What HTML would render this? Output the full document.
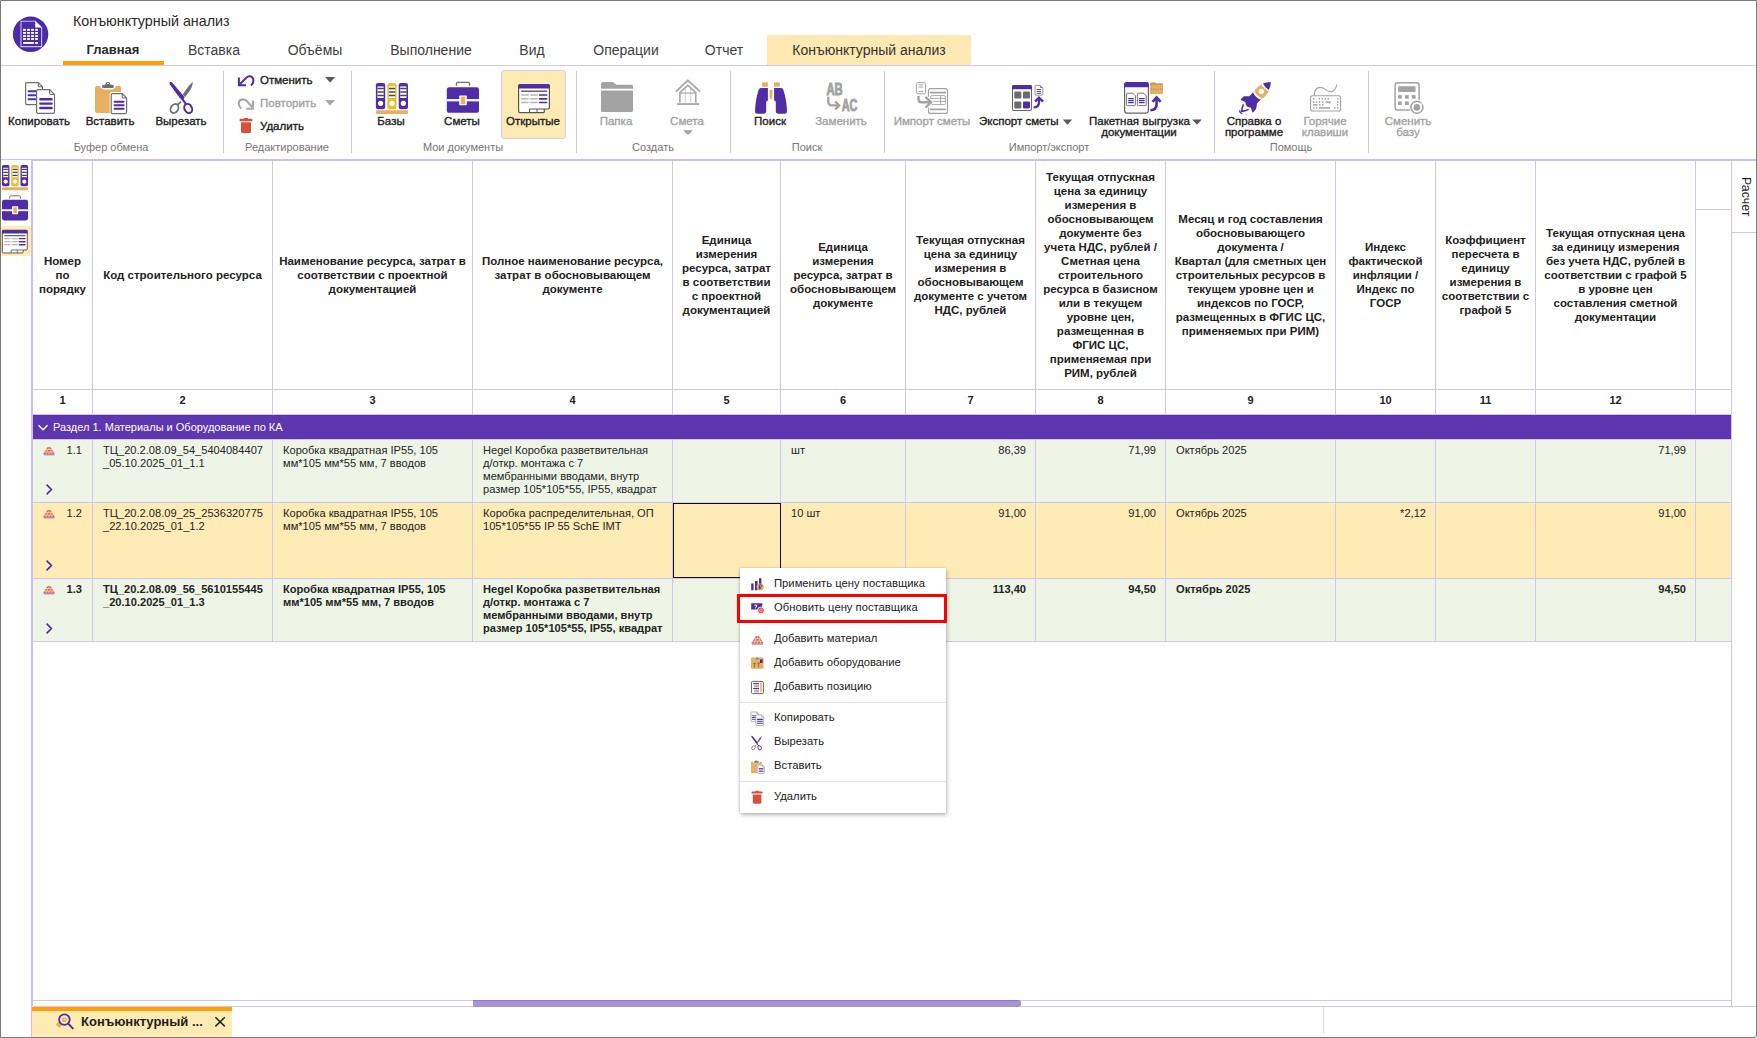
<!DOCTYPE html>
<html><head><meta charset="utf-8">
<style>
*{box-sizing:border-box;margin:0;padding:0}
html,body{width:1757px;height:1038px;overflow:hidden;background:#fff}
body{position:relative;font-family:"Liberation Sans",sans-serif;color:#222}
.a{position:absolute}
.t{position:absolute;white-space:nowrap}
.c{text-align:center}
.r{text-align:right}
.ln{position:absolute;background:#d2c6ec}
.tab{position:absolute;top:42px;width:140px;text-align:center;font-size:14px;line-height:16px;color:#404040}
.bl{position:absolute;width:100px;text-align:center;font-size:11.5px;line-height:11px;font-weight:normal;color:#222;-webkit-text-stroke:0.35px #222}
.bl.g{color:#a3a3a3;-webkit-text-stroke:0.35px #a3a3a3}
.gl{position:absolute;top:142px;width:120px;text-align:center;font-size:11px;line-height:11px;color:#767676}
.sep{position:absolute;top:71px;width:1px;height:82px;background:#cfc2ec}
.hd{position:absolute;top:160px;height:229px;display:flex;align-items:center;justify-content:center;text-align:center;font-size:11.5px;line-height:14px;font-weight:bold;color:#222;white-space:nowrap;letter-spacing:0}
.num{position:absolute;top:395px;text-align:center;font-size:11px;line-height:11px;font-weight:bold;color:#222}
.cell{position:absolute;font-size:11.1px;line-height:13.1px;color:#242424;white-space:nowrap;letter-spacing:0}
.b{font-weight:bold}
.mi{position:absolute;left:774px;font-size:11.25px;line-height:11px;color:#222}
</style></head><body>
<!-- window border -->
<div class="a" style="left:0;top:0;width:1757px;height:1038px;border:1px solid #7a7a7a;border-radius:0 0 3px 0"></div>

<!-- title & tabs -->
<div class="t" style="left:73px;top:13px;font-size:14.3px;line-height:16px;color:#2a2a2a">Конъюнктурный анализ</div>
<div class="a" style="left:767px;top:35px;width:204px;height:30px;background:#fde9b1"></div>
<div class="tab" style="left:43px;font-weight:bold;font-size:13px;color:#2a2a2a">Главная</div>
<div class="tab" style="left:144px">Вставка</div>
<div class="tab" style="left:245px">Объёмы</div>
<div class="tab" style="left:361px">Выполнение</div>
<div class="tab" style="left:462px">Вид</div>
<div class="tab" style="left:556px">Операции</div>
<div class="tab" style="left:654px">Отчет</div>
<div class="tab" style="left:784px;width:170px;color:#333">Конъюнктурный анализ</div>
<div class="a" style="left:1px;top:65px;width:1755px;height:1px;background:#d3c7ee"></div>
<div class="a" style="left:63px;top:61px;width:101px;height:4px;background:#ff9f00"></div>

<!-- ribbon -->
<div class="a" style="left:501px;top:70px;width:65px;height:69px;background:#feeab3;border:1px solid #dccbee;border-radius:3px"></div>
<div class="sep" style="left:223px"></div>
<div class="sep" style="left:351px"></div>
<div class="sep" style="left:576px"></div>
<div class="sep" style="left:730px"></div>
<div class="sep" style="left:884px"></div>
<div class="sep" style="left:1214px"></div>
<div class="sep" style="left:1368px"></div>

<div class="bl" style="left:-11px;top:116px">Копировать</div>
<div class="bl" style="left:60px;top:116px">Вставить</div>
<div class="bl" style="left:131px;top:116px">Вырезать</div>
<div class="t" style="left:260px;top:75px;font-size:11.5px;line-height:11px;-webkit-text-stroke:0.35px #222">Отменить</div>
<div class="t" style="left:260px;top:98px;font-size:11.5px;line-height:11px;color:#a3a3a3;-webkit-text-stroke:0.35px #a3a3a3">Повторить</div>
<div class="t" style="left:260px;top:121px;font-size:11.5px;line-height:11px;-webkit-text-stroke:0.35px #222">Удалить</div>
<div class="bl" style="left:341px;top:116px">Базы</div>
<div class="bl" style="left:412px;top:116px">Сметы</div>
<div class="bl" style="left:483px;top:116px">Открытые</div>
<div class="bl g" style="left:566px;top:116px">Папка</div>
<div class="bl g" style="left:637px;top:116px">Смета</div>
<div class="bl" style="left:720px;top:116px">Поиск</div>
<div class="bl g" style="left:791px;top:116px">Заменить</div>
<div class="bl g" style="left:882px;top:116px">Импорт сметы</div>
<div class="t" style="left:979px;top:116px;font-size:11.5px;line-height:11px;-webkit-text-stroke:0.35px #222">Экспорт сметы</div>
<div class="t" style="left:1089px;top:116px;font-size:11.5px;line-height:11px;-webkit-text-stroke:0.35px #222">Пакетная выгрузка</div>
<div class="bl" style="left:1089px;top:127px">документации</div>
<div class="bl" style="left:1204px;top:116px">Справка о</div>
<div class="bl" style="left:1204px;top:127px">программе</div>
<div class="bl g" style="left:1275px;top:116px">Горячие</div>
<div class="bl g" style="left:1275px;top:127px">клавиши</div>
<div class="bl g" style="left:1358px;top:116px">Сменить</div>
<div class="bl g" style="left:1358px;top:127px">базу</div>

<div class="gl" style="left:51px">Буфер обмена</div>
<div class="gl" style="left:227px">Редактирование</div>
<div class="gl" style="left:403px">Мои документы</div>
<div class="gl" style="left:593px">Создать</div>
<div class="gl" style="left:747px">Поиск</div>
<div class="gl" style="left:989px">Импорт/экспорт</div>
<div class="gl" style="left:1231px">Помощь</div>

<div class="a" style="left:1px;top:159px;width:1755px;height:1px;background:#cdbfea"></div><div class="a" style="left:31px;top:160px;width:1725px;height:1px;background:#cdbfea"></div>

<div class="a" style="left:33px;top:440px;width:1698px;height:62px;background:#eef5e6"></div>
<div class="a" style="left:33px;top:503px;width:1698px;height:75px;background:#feebb5"></div>
<div class="a" style="left:33px;top:579px;width:1698px;height:62px;background:#eef5e6"></div>
<div class="a" style="left:33px;top:415px;width:1698px;height:24px;background:#5d36b0;border-top:1px solid #5530a8"></div>
<div class="a" style="left:31px;top:161px;width:2px;height:845px;background:#cdbfea"></div>
<div class="a" style="left:31px;top:1006px;width:1px;height:31px;background:#cdbfea"></div>
<div class="ln" style="left:33px;top:389px;width:1698px;height:1px"></div>
<div class="ln" style="left:33px;top:414px;width:1698px;height:1px"></div>
<div class="ln" style="left:33px;top:439px;width:1698px;height:1px"></div>
<div class="ln" style="left:33px;top:502px;width:1698px;height:1px"></div>
<div class="ln" style="left:33px;top:578px;width:1698px;height:1px"></div>
<div class="ln" style="left:33px;top:641px;width:1698px;height:1px"></div>
<div class="ln" style="left:92px;top:161px;width:1px;height:253px"></div>
<div class="ln" style="left:92px;top:440px;width:1px;height:201px"></div>
<div class="ln" style="left:272px;top:161px;width:1px;height:253px"></div>
<div class="ln" style="left:272px;top:440px;width:1px;height:201px"></div>
<div class="ln" style="left:472px;top:161px;width:1px;height:253px"></div>
<div class="ln" style="left:472px;top:440px;width:1px;height:201px"></div>
<div class="ln" style="left:672px;top:161px;width:1px;height:253px"></div>
<div class="ln" style="left:672px;top:440px;width:1px;height:201px"></div>
<div class="ln" style="left:780px;top:161px;width:1px;height:253px"></div>
<div class="ln" style="left:780px;top:440px;width:1px;height:201px"></div>
<div class="ln" style="left:905px;top:161px;width:1px;height:253px"></div>
<div class="ln" style="left:905px;top:440px;width:1px;height:201px"></div>
<div class="ln" style="left:1035px;top:161px;width:1px;height:253px"></div>
<div class="ln" style="left:1035px;top:440px;width:1px;height:201px"></div>
<div class="ln" style="left:1165px;top:161px;width:1px;height:253px"></div>
<div class="ln" style="left:1165px;top:440px;width:1px;height:201px"></div>
<div class="ln" style="left:1335px;top:161px;width:1px;height:253px"></div>
<div class="ln" style="left:1335px;top:440px;width:1px;height:201px"></div>
<div class="ln" style="left:1435px;top:161px;width:1px;height:253px"></div>
<div class="ln" style="left:1435px;top:440px;width:1px;height:201px"></div>
<div class="ln" style="left:1535px;top:161px;width:1px;height:253px"></div>
<div class="ln" style="left:1535px;top:440px;width:1px;height:201px"></div>
<div class="ln" style="left:1695px;top:161px;width:1px;height:253px"></div>
<div class="ln" style="left:1695px;top:440px;width:1px;height:201px"></div>
<div class="ln" style="left:1731px;top:161px;width:1px;height:845px"></div>
<div class="ln" style="left:1696px;top:209px;width:35px;height:1px"></div>
<div class="ln" style="left:1732px;top:232px;width:24px;height:1px"></div>
<div class="t" style="left:1736px;top:177px;width:40px;transform-origin:0 0;transform:translate(17px,0) rotate(90deg);font-size:12.4px;line-height:14px;color:#222">Расчет</div>
<div class="hd" style="left:33px;width:59px"><div>Номер<br>по<br>порядку</div></div>
<div class="num" style="left:33px;width:59px">1</div>
<div class="hd" style="left:93px;width:179px"><div>Код строительного ресурса</div></div>
<div class="num" style="left:93px;width:179px">2</div>
<div class="hd" style="left:273px;width:199px"><div>Наименование ресурса, затрат в<br>соответствии с проектной<br>документацией</div></div>
<div class="num" style="left:273px;width:199px">3</div>
<div class="hd" style="left:473px;width:199px"><div>Полное наименование ресурса,<br>затрат в обосновывающем<br>документе</div></div>
<div class="num" style="left:473px;width:199px">4</div>
<div class="hd" style="left:673px;width:107px"><div>Единица<br>измерения<br>ресурса, затрат<br>в соответствии<br>с проектной<br>документацией</div></div>
<div class="num" style="left:673px;width:107px">5</div>
<div class="hd" style="left:781px;width:124px"><div>Единица<br>измерения<br>ресурса, затрат в<br>обосновывающем<br>документе</div></div>
<div class="num" style="left:781px;width:124px">6</div>
<div class="hd" style="left:906px;width:129px"><div>Текущая отпускная<br>цена за единицу<br>измерения в<br>обосновывающем<br>документе с учетом<br>НДС, рублей</div></div>
<div class="num" style="left:906px;width:129px">7</div>
<div class="hd" style="left:1036px;width:129px"><div>Текущая отпускная<br>цена за единицу<br>измерения в<br>обосновывающем<br>документе без<br>учета НДС, рублей /<br>Сметная цена<br>строительного<br>ресурса в базисном<br>или в текущем<br>уровне цен,<br>размещенная в<br>ФГИС ЦС,<br>применяемая при<br>РИМ, рублей</div></div>
<div class="num" style="left:1036px;width:129px">8</div>
<div class="hd" style="left:1166px;width:169px"><div>Месяц и год составления<br>обосновывающего<br>документа /<br>Квартал (для сметных цен<br>строительных ресурсов в<br>текущем уровне цен и<br>индексов по ГОСР,<br>размещенных в ФГИС ЦС,<br>применяемых при РИМ)</div></div>
<div class="num" style="left:1166px;width:169px">9</div>
<div class="hd" style="left:1336px;width:99px"><div>Индекс<br>фактической<br>инфляции /<br>Индекс по<br>ГОСР</div></div>
<div class="num" style="left:1336px;width:99px">10</div>
<div class="hd" style="left:1436px;width:99px"><div>Коэффициент<br>пересчета в<br>единицу<br>измерения в<br>соответствии с<br>графой 5</div></div>
<div class="num" style="left:1436px;width:99px">11</div>
<div class="hd" style="left:1536px;width:159px"><div>Текущая отпускная цена<br>за единицу измерения<br>без учета НДС, рублей в<br>соответствии с графой 5<br>в уровне цен<br>составления сметной<br>документации</div></div>
<div class="num" style="left:1536px;width:159px">12</div>
<svg class="a" style="left:36px;top:422px" width="14" height="12" viewBox="0 0 14 12"><path d="M2.5 3.2 L7 7.8 L11.5 3.2" fill="none" stroke="#fff" stroke-width="1.4"/></svg>
<div class="t" style="left:53px;top:421px;font-size:11px;line-height:13px;color:#fff">Раздел 1. Материалы и Оборудование по КА</div>
<div class="cell r" style="left:-38px;width:120px;top:444px">1.1</div>
<div class="cell" style="left:103px;top:444px">ТЦ_20.2.08.09_54_5404084407<br>_05.10.2025_01_1.1</div>
<div class="cell" style="left:283px;top:444px">Коробка квадратная IP55, 105<br>мм*105 мм*55 мм, 7 вводов</div>
<div class="cell" style="left:483px;top:444px">Hegel Коробка разветвительная<br>д/откр. монтажа с 7<br>мембранными вводами, внутр<br>размер 105*105*55, IP55, квадрат</div>
<div class="cell" style="left:791px;top:444px">шт</div>
<div class="cell r" style="left:906px;width:120px;top:444px">86,39</div>
<div class="cell r" style="left:1036px;width:120px;top:444px">71,99</div>
<div class="cell" style="left:1176px;top:444px">Октябрь 2025</div>
<div class="cell r" style="left:1566px;width:120px;top:444px">71,99</div>
<svg class="a" style="left:44px;top:483px" width="10" height="13" viewBox="0 0 10 13"><path d="M2.6 1.6 L7.4 6.5 L2.6 11.4" fill="none" stroke="#4b2aa8" stroke-width="1.6"/></svg>
<div class="cell r" style="left:-38px;width:120px;top:507px">1.2</div>
<div class="cell" style="left:103px;top:507px">ТЦ_20.2.08.09_25_2536320775<br>_22.10.2025_01_1.2</div>
<div class="cell" style="left:283px;top:507px">Коробка квадратная IP55, 105<br>мм*105 мм*55 мм, 7 вводов</div>
<div class="cell" style="left:483px;top:507px">Коробка распределительная, ОП<br>105*105*55 IP 55 SchE IMT</div>
<div class="cell" style="left:791px;top:507px">10 шт</div>
<div class="cell r" style="left:906px;width:120px;top:507px">91,00</div>
<div class="cell r" style="left:1036px;width:120px;top:507px">91,00</div>
<div class="cell" style="left:1176px;top:507px">Октябрь 2025</div>
<div class="cell r" style="left:1306px;width:120px;top:507px">*2,12</div>
<div class="cell r" style="left:1566px;width:120px;top:507px">91,00</div>
<svg class="a" style="left:44px;top:559px" width="10" height="13" viewBox="0 0 10 13"><path d="M2.6 1.6 L7.4 6.5 L2.6 11.4" fill="none" stroke="#4b2aa8" stroke-width="1.6"/></svg>
<div class="cell b r" style="left:-38px;width:120px;top:583px">1.3</div>
<div class="cell b" style="left:103px;top:583px">ТЦ_20.2.08.09_56_5610155445<br>_20.10.2025_01_1.3</div>
<div class="cell b" style="left:283px;top:583px">Коробка квадратная IP55, 105<br>мм*105 мм*55 мм, 7 вводов</div>
<div class="cell b" style="left:483px;top:583px">Hegel Коробка разветвительная<br>д/откр. монтажа с 7<br>мембранными вводами, внутр<br>размер 105*105*55, IP55, квадрат</div>
<div class="cell b r" style="left:906px;width:120px;top:583px">113,40</div>
<div class="cell b r" style="left:1036px;width:120px;top:583px">94,50</div>
<div class="cell b" style="left:1176px;top:583px">Октябрь 2025</div>
<div class="cell b r" style="left:1566px;width:120px;top:583px">94,50</div>
<svg class="a" style="left:44px;top:622px" width="10" height="13" viewBox="0 0 10 13"><path d="M2.6 1.6 L7.4 6.5 L2.6 11.4" fill="none" stroke="#4b2aa8" stroke-width="1.6"/></svg>
<div class="a" style="left:673px;top:503px;width:108px;height:75px;border:1px solid #111"></div>
<div class="ln" style="left:33px;top:1000px;width:1698px;height:1px"></div>
<div class="ln" style="left:33px;top:1006px;width:1723px;height:1px"></div>
<div class="a" style="left:473px;top:1000px;width:548px;height:7px;background:#a894d5;border-top:1px solid #9278c8;border-radius:0 3px 3px 0"></div>
<div class="a" style="left:32px;top:1007px;width:200px;height:30px;background:#feeab3;border-top:4px solid #ff9f00"></div>
<div class="t b" style="left:81px;top:1014px;font-size:13px;line-height:15px;color:#1e1e1e">Конъюнктурный ...</div>
<div class="a" style="left:1323px;top:1007px;width:1px;height:27px;background:#dddddd"></div>

<div class="a" style="left:740px;top:568px;width:206px;height:245px;background:#fff;box-shadow:1px 2px 4px rgba(0,0,0,0.28), -1px 0 2px rgba(0,0,0,0.12)"></div>
<div class="mi" style="top:578.1px">Применить цену поставщика</div>
<div class="mi" style="top:602.1px">Обновить цену поставщика</div>
<div class="mi" style="top:633.1px">Добавить материал</div>
<div class="mi" style="top:657.1px">Добавить оборудование</div>
<div class="mi" style="top:681.1px">Добавить позицию</div>
<div class="mi" style="top:712.1px">Копировать</div>
<div class="mi" style="top:736.1px">Вырезать</div>
<div class="mi" style="top:760.1px">Вставить</div>
<div class="mi" style="top:791.1px">Удалить</div>
<div class="a" style="left:740px;top:702px;width:206px;height:1px;background:#e3e3e3"></div>
<div class="a" style="left:740px;top:781px;width:206px;height:1px;background:#e3e3e3"></div>
<div class="a" style="left:737px;top:594px;width:210px;height:29px;border:3px solid #ff0000"></div>

<svg class="a" style="left:0;top:0" width="1757" height="1038" viewBox="0 0 1757 1038">

<circle cx="30.6" cy="34.3" r="17.7" fill="#4b2ca7"/>
<path d="M21 21.2 H35.2 L41.6 27.6 V46.6 H21 Z" fill="#4b2ca7" stroke="#c9bcef" stroke-width="1.1"/>
<path d="M35.2 21.2 L41.6 27.6 H35.2 Z" fill="#fff"/>
<rect x="23.1" y="28.9" width="2.8" height="1.9" fill="#fff"/><rect x="23.1" y="32.0" width="2.8" height="1.9" fill="#fff"/><rect x="23.1" y="35.1" width="2.8" height="1.9" fill="#fff"/><rect x="23.1" y="38.0" width="2.8" height="1.9" fill="#fff"/><rect x="27.1" y="28.9" width="2.8" height="1.9" fill="#fff"/><rect x="27.1" y="32.0" width="2.8" height="1.9" fill="#fff"/><rect x="27.1" y="35.1" width="2.8" height="1.9" fill="#fff"/><rect x="27.1" y="38.0" width="2.8" height="1.9" fill="#fff"/><rect x="31.1" y="28.9" width="2.8" height="1.9" fill="#fff"/><rect x="31.1" y="32.0" width="2.8" height="1.9" fill="#fff"/><rect x="31.1" y="35.1" width="2.8" height="1.9" fill="#fff"/><rect x="31.1" y="38.0" width="2.8" height="1.9" fill="#fff"/><rect x="35.1" y="28.9" width="2.8" height="1.9" fill="#fff"/><rect x="35.1" y="32.0" width="2.8" height="1.9" fill="#fff"/><rect x="35.1" y="35.1" width="2.8" height="1.9" fill="#fff"/><rect x="35.1" y="38.0" width="2.8" height="1.9" fill="#fff"/><rect x="23.1" y="42" width="10.8" height="1.9" fill="#fff"/><rect x="35.1" y="42" width="2.9" height="1.9" fill="#fff"/>

<path d="M27 82.6 H38.3 L42.4 86.7 V103.2 Q42.4 104.6 41 104.6 H27 Q25.6 104.6 25.6 103.2 V84 Q25.6 82.6 27 82.6 Z" fill="#fff" stroke="#6e6e6e" stroke-width="1.2"/>
<path d="M38.3 82.6 V85.6 Q38.3 86.7 39.4 86.7 H42.4" fill="none" stroke="#6e6e6e" stroke-width="1.1"/>
<path d="M28.6 91.2 H35.5 M28.6 95.2 H35.5 M28.6 99.2 H35.5" stroke="#4e2da6" stroke-width="2.1" stroke-linecap="round"/>
<path d="M38 89.6 H49.6 L54.5 94.5 V112 Q54.5 113.4 53.1 113.4 H38 Q36.6 113.4 36.6 112 V91 Q36.6 89.6 38 89.6 Z" fill="#fff" stroke="#6e6e6e" stroke-width="1.2"/>
<path d="M49.6 89.6 V93.3 Q49.6 94.5 50.8 94.5 H54.5" fill="none" stroke="#6e6e6e" stroke-width="1.1"/>
<path d="M40.3 99.3 H51.6 M40.3 103.6 H51.6 M40.3 108 H51.6" stroke="#4e2da6" stroke-width="2.4" stroke-linecap="round"/>


<rect x="95" y="86" width="26.2" height="27" rx="2.2" fill="#e6b062"/>
<path d="M99.4 85.6 Q101.4 89.5 104.2 89.5 H111.8 Q114.6 89.5 116.4 85.6 Z" fill="#fff"/>
<rect x="102" y="84.8" width="11.8" height="3.1" rx="1.5" fill="#6e6e6e"/>
<path d="M105.3 85.2 L106.1 82.6 Q106.3 81.9 107 81.9 H108.8 Q109.5 81.9 109.7 82.6 L110.4 85.2 Z" fill="#6e6e6e"/>
<rect x="107" y="83" width="1.8" height="1" fill="#fff"/>
<path d="M112.6 93.6 H122.2 L126.6 98 V112.2 Q126.6 113.6 125.2 113.6 H112.6 Q111.2 113.6 111.2 112.2 V95 Q111.2 93.6 112.6 93.6 Z" fill="#fff" stroke="#fff" stroke-width="3"/>
<path d="M112.6 93.6 H122.2 L126.6 98 V112.2 Q126.6 113.6 125.2 113.6 H112.6 Q111.2 113.6 111.2 112.2 V95 Q111.2 93.6 112.6 93.6 Z" fill="#fff" stroke="#6e6e6e" stroke-width="1.2"/>
<path d="M122.2 93.6 V96.8 Q122.2 98 123.4 98 H126.6" fill="none" stroke="#6e6e6e" stroke-width="1.1"/>
<path d="M114.6 101.8 H123.6 M114.6 105.2 H123.6 M114.6 108.8 H123.6" stroke="#4e2da6" stroke-width="2" stroke-linecap="round"/>


<path d="M170.2 81.8 Q171.6 81.9 172.6 83 L184.7 97.3 L182.7 100.3 L179.7 97.9 L169.7 84.2 Q169.1 82.3 170.2 81.8 Z" fill="#4e2da6"/>
<path d="M182 98.6 L186.2 104.4" stroke="#4e2da6" stroke-width="2"/>
<ellipse cx="188.2" cy="108.5" rx="3.7" ry="4.8" transform="rotate(-30 188.2 108.5)" fill="none" stroke="#4e2da6" stroke-width="2"/>
<path d="M192.9 82 Q192.7 86 190.4 89.7 L185.3 96.9 L182.6 94.7 L187.6 87.4 Q190 84 192.9 82 Z" fill="#6e6e6e"/>
<path d="M181 101.8 L177.6 104.6" stroke="#6e6e6e" stroke-width="1.8"/>
<ellipse cx="174.5" cy="108.5" rx="3.6" ry="4.8" transform="rotate(32 174.5 108.5)" fill="none" stroke="#6e6e6e" stroke-width="1.8"/>


<path d="M239.8 84.4 L246 78 Q248 76.2 250 76.3 Q253.4 76.8 253.4 80.8 Q253.4 83.4 250.9 85.5" fill="none" stroke="#4e2da6" stroke-width="2"/>
<path d="M238.9 77.4 V85.3 H246" fill="none" stroke="#4e2da6" stroke-width="2"/>


<path d="M241.2 108.6 Q238.7 106.2 238.7 103.6 Q238.9 99.5 243.1 99.4 Q245.1 99.4 246.7 101 L252.4 107.2" fill="none" stroke="#a8a8a8" stroke-width="2.1"/>
<path d="M252.9 100.5 V108.8 H246.2" fill="none" stroke="#a8a8a8" stroke-width="2.1"/>


<path d="M239.6 121.2 V119.6 Q239.6 118.8 240.4 118.8 H244 V118 H248 V118.8 H251.6 Q252.4 118.8 252.4 119.6 V121.2 Z" fill="#d9503a"/>
<path d="M241 122.2 H251 V131.4 Q251 133 249.4 133 H242.6 Q241 133 241 131.4 Z" fill="#d9503a"/>

<path d="M325 77 H335.2 L330.1 82.6 Z" fill="#585858"/><path d="M325 100 H335.2 L330.1 105.6 Z" fill="#a8a8a8"/><path d="M1062.8 119.6 H1072.2 L1067.5 124.8 Z" fill="#585858"/><path d="M1192.2 119.6 H1201.8 L1197 124.8 Z" fill="#585858"/>
<rect x="375.9" y="83" width="9.3" height="26.2" rx="2.2" fill="#4e2da6"/><rect x="377.5" y="86.4" width="6.1" height="11.6" fill="#fff"/><path d="M378.2 88.4 H383.09999999999997 M378.2 92 H383.09999999999997 M378.2 95.6 H383.09999999999997" stroke="#444" stroke-width="1.5" stroke-linecap="round"/><circle cx="380.54999999999995" cy="103.3" r="2.6" fill="#fff"/><rect x="387.3" y="83" width="9.3" height="26.2" rx="2.2" fill="#e9c12f"/><rect x="388.90000000000003" y="86.4" width="6.1" height="11.6" fill="#fff"/><path d="M389.6 88.4 H394.5 M389.6 92 H394.5 M389.6 95.6 H394.5" stroke="#444" stroke-width="1.5" stroke-linecap="round"/><circle cx="391.95" cy="103.3" r="2.6" fill="#fff"/><rect x="398.7" y="83" width="9.3" height="26.2" rx="2.2" fill="#4e2da6"/><rect x="400.3" y="86.4" width="6.1" height="11.6" fill="#fff"/><path d="M401.0 88.4 H405.9 M401.0 92 H405.9 M401.0 95.6 H405.9" stroke="#444" stroke-width="1.5" stroke-linecap="round"/><circle cx="403.34999999999997" cy="103.3" r="2.6" fill="#fff"/><rect x="376" y="110.2" width="32" height="3.7" rx="1" fill="#e6b062"/>

<path d="M456.4 85.8 V83.6 Q456.4 82.4 457.6 82.4 H468.4 Q469.6 82.4 469.6 83.6 V85.8" fill="none" stroke="#6e6e6e" stroke-width="1.2"/>
<rect x="446.8" y="87.2" width="32.2" height="25.6" rx="2.6" fill="#4e2da6"/>
<rect x="446.8" y="99" width="32.2" height="2.4" fill="#f4f0fb"/>
<rect x="459.2" y="95.4" width="7.6" height="9.8" rx="0.8" fill="#fff"/>
<rect x="460.8" y="96.6" width="4.4" height="7.4" fill="#e6b062"/>


<path d="M520 84.6 H548 Q549.4 84.6 549.4 86 V107.6 Q549.4 109 548 109 H544.3 V111.4 Q544.3 112.7 543 112.7 H520 Q518.6 112.7 518.6 111.3 V86 Q518.6 84.6 520 84.6 Z" fill="#fff" stroke="#555" stroke-width="1.2"/>
<path d="M518.2 88.6 V86 Q518.2 84.2 520 84.2 H548 Q549.8 84.2 549.8 86 V88.6 Z" fill="#4e2da6"/>
<path d="M521.6 91.2 H546.6" stroke="#666" stroke-width="1.6" stroke-linecap="round"/>
<path d="M521.6 95 H528.2 M530.8 95 H537.2 M521.6 98.8 H528.2 M530.8 98.8 H537.2 M521.6 102.5 H528.2 M530.8 102.5 H537.2" stroke="#b8b8b8" stroke-width="1.6" stroke-linecap="round"/>
<path d="M539.6 95 H546.6 M539.6 98.8 H546.6 M539.6 102.5 H546.6" stroke="#4e2da6" stroke-width="1.7" stroke-linecap="round"/>
<path d="M529.5 109 V112.7 M537 109 V112.7 M529.5 109 H544.3" stroke="#555" stroke-width="1"/>


<path d="M601 88.8 V83.6 Q601 82 602.6 82 H611.8 Q613.2 82 614.3 83 L616.3 84.7 H631.4 Q633 84.7 633 86.3 V88.8 Z" fill="#a3a3a3"/>
<path d="M601 90.6 H633 V110.4 Q633 112 631.4 112 H602.6 Q601 112 601 110.4 Z" fill="#a3a3a3"/>


<path d="M676.1 91.4 L687.8 80.4 L699.9 91.4" fill="none" stroke="#a3a3a3" stroke-width="1.7"/>
<path d="M685.3 86.8 V102.6 M690.6 86.8 V102.6" stroke="#d0d0d0" stroke-width="1"/>
<path d="M679.9 102.8 V92.6 L687.8 85.2 L695.8 92.6 V102.8" fill="none" stroke="#a3a3a3" stroke-width="1.5"/>
<path d="M680 93.1 H695.6" stroke="#a3a3a3" stroke-width="1.1"/>
<rect x="677" y="103.2" width="22.2" height="1.7" fill="#a3a3a3"/>
<path d="M683 130.2 H693 L688 135.1 Z" fill="#a3a3a3"/>


<rect x="762.1" y="82.3" width="5.8" height="4.4" fill="#e6b062"/>
<rect x="773.9" y="82.3" width="5.9" height="4.4" fill="#e6b062"/>
<path d="M760.6 88.1 H767.9 V100.6 L766.2 101.6 V111.6 Q766.2 113.7 764 113.7 H757.2 Q755 113.7 755 111.4 Q755.4 100 758.2 91.2 Q759 88.1 760.6 88.1 Z" fill="#4e2da6"/>
<path d="M781.4 88.1 H774.1 V100.6 L775.8 101.6 V111.6 Q775.8 113.7 778 113.7 H784.8 Q787 113.7 787 111.4 Q786.6 100 783.8 91.2 Q783 88.1 781.4 88.1 Z" fill="#4e2da6"/>
<rect x="769.6" y="89.9" width="2.8" height="8.9" fill="#e6b062"/>


<text x="826.4" y="94.6" font-family="Liberation Sans" font-weight="bold" font-size="15.8" textLength="16.4" lengthAdjust="spacingAndGlyphs" fill="#a3a3a3" stroke="#a3a3a3" stroke-width="0.9">AB</text>
<text x="841.7" y="111.3" font-family="Liberation Sans" font-weight="bold" font-size="15.8" textLength="15.8" lengthAdjust="spacingAndGlyphs" fill="#a3a3a3" stroke="#a3a3a3" stroke-width="0.9">AC</text>
<path d="M828.3 96.8 V101.6 Q828.3 105.4 832 105.4 H839" fill="none" stroke="#a3a3a3" stroke-width="2.3"/>
<path d="M835.2 101.4 L839.2 105.4 L835.2 109.4" fill="none" stroke="#a3a3a3" stroke-width="2.3"/>


<rect x="916.6" y="82.6" width="8.9" height="11.2" rx="1.2" fill="#fff" stroke="#a3a3a3" stroke-width="1"/>
<path d="M918.6 84.8 H923.4" stroke="#a3a3a3" stroke-width="1"/>
<path d="M918.6 86.6 H923.4 M918.6 87.4 H923.4" stroke="#cfcfcf" stroke-width="1"/>
<path d="M918.6 91.4 H923.4" stroke="#a3a3a3" stroke-width="1"/>
<rect x="928.5" y="88.6" width="19" height="24.8" rx="2" fill="#fff" stroke="#a3a3a3" stroke-width="1.2"/>
<path d="M930.6 92.6 H945.4 M930.6 109.4 H945.4" stroke="#a3a3a3" stroke-width="1.6" stroke-linecap="round"/>
<rect x="930.6" y="95.6" width="14.8" height="9" rx="1.2" fill="none" stroke="#a3a3a3" stroke-width="0.9"/>
<path d="M930.6 98.4 H945.4 M932 101.4 H945.4 M940.6 95.6 V104.6" stroke="#a3a3a3" stroke-width="0.9"/>
<path d="M926.2 97.6 L931 102.3 L926.2 107" fill="none" stroke="#fff" stroke-width="4.2" stroke-linecap="round"/>
<path d="M918.5 96 V99 Q918.5 102.3 921.8 102.3 H930.4" fill="none" stroke="#a3a3a3" stroke-width="2.4"/>
<path d="M926.2 97.6 L931 102.3 L926.2 107" fill="none" stroke="#a3a3a3" stroke-width="2.4" stroke-linecap="round"/>


<rect x="1012.5" y="85.5" width="19" height="25" rx="1.6" fill="#fff" stroke="#666" stroke-width="1.1"/>
<path d="M1012 89.2 V86.6 Q1012 85 1013.6 85 H1030.4 Q1032 85 1032 86.6 V89.2 Z" fill="#4e2da6"/>
<rect x="1014.3" y="91.6" width="7" height="7" rx="1.2" fill="#6b6b6b"/>
<rect x="1023" y="91.6" width="7" height="7" rx="1.2" fill="#6b6b6b"/>
<rect x="1014.3" y="101.4" width="7" height="7" rx="1.2" fill="#6b6b6b"/>
<rect x="1023" y="101.4" width="7" height="7" rx="1.2" fill="#4e2da6"/>
<path d="M1035.8 85.4 H1040.2 L1042.8 88 V94.4 Q1042.8 95.2 1042 95.2 H1035.8 Q1035 95.2 1035 94.4 V86.2 Q1035 85.4 1035.8 85.4 Z" fill="#fff" stroke="#8a8a8a" stroke-width="0.9"/>
<path d="M1040.2 85.4 V87.4 Q1040.2 88 1040.8 88 H1042.8 Z" fill="#777"/>
<path d="M1036.6 89.5 H1041.2 M1036.6 91.5 H1041.2 M1036.6 93.4 H1041.2" stroke="#4e2da6" stroke-width="0.9"/>
<path d="M1033.6 107.4 Q1039 107.4 1039 102 V98.6" fill="none" stroke="#4e2da6" stroke-width="2.3"/>
<path d="M1035 101.6 L1039 97.6 L1043.1 101.6" fill="none" stroke="#4e2da6" stroke-width="2.3"/>


<rect x="1124.6" y="82.6" width="23.8" height="30.6" rx="2.6" fill="#fff" stroke="#666" stroke-width="1.2"/>
<path d="M1124 87.2 V85 Q1124 82 1127 82 H1146 Q1149 82 1149 85 V87.2 Z" fill="#4e2da6"/>
<path d="M1127.5 93.2 H1132.8 L1135.3999999999999 95.8 V104.8 Q1135.3999999999999 105.6 1134.6 105.6 H1127.5 Q1126.6 105.6 1126.6 104.8 V94 Q1126.6 93.2 1127.5 93.2 Z" fill="#fff" stroke="#666" stroke-width="0.9"/><path d="M1128.1999999999998 98.6 H1133.8 M1128.1999999999998 100.6 H1133.8 M1128.1999999999998 102.6 H1133.8" stroke="#4e2da6" stroke-width="1.1"/><path d="M1138.3000000000002 93.2 H1143.6000000000001 L1146.2 95.8 V104.8 Q1146.2 105.6 1145.4 105.6 H1138.3000000000002 Q1137.4 105.6 1137.4 104.8 V94 Q1137.4 93.2 1138.3000000000002 93.2 Z" fill="#fff" stroke="#666" stroke-width="0.9"/><path d="M1139.0 98.6 H1144.6000000000001 M1139.0 100.6 H1144.6000000000001 M1139.0 102.6 H1144.6000000000001" stroke="#4e2da6" stroke-width="1.1"/>
<path d="M1150 84.6 Q1150 82.2 1152 82.2 H1155 L1156.6 84 H1163 V94 H1150 Z" fill="#e6b062"/>
<path d="M1150 84 H1163" stroke="#b98a3a" stroke-width="1.2"/>
<path d="M1150.5 89.2 H1163" stroke="#8a8a9a" stroke-width="1" stroke-dasharray="1.2 1.2"/>
<path d="M1150.4 110.2 Q1156.6 110.2 1156.6 104 V98.6" fill="none" stroke="#4e2da6" stroke-width="2.6"/>
<path d="M1152.6 101.8 L1156.6 97.4 L1160.6 101.8" fill="none" stroke="#4e2da6" stroke-width="2.6"/>


<path d="M1262.9 83.6 Q1266 82.2 1270.9 81.9 Q1270.9 86.5 1268.7 90 Q1264.5 87.2 1262.9 83.6 Z" fill="#4e2da6"/>
<path d="M1261.5 84.3 Q1263.5 88.6 1268.8 91.3 Q1266.5 95.6 1262.4 98.8 Q1257.4 96.6 1254.3 91 Q1257.4 86.6 1261.5 84.3 Z" fill="#e6b062"/>
<circle cx="1261.3" cy="91.4" r="2.6" fill="#fff"/>
<path d="M1253 92.2 Q1255.5 97.6 1260.7 99.8 Q1258 102 1256.8 104 Q1257.4 109 1252.6 112.7 Q1251.4 109.5 1250.9 107.4 Q1248 107.2 1247.4 106.7 Q1245.6 105 1245.4 102.2 Q1242.5 100.6 1240.4 100.1 Q1242 97.5 1244 96.3 Q1247 96 1249.2 96.3 Q1251.5 94.3 1253 92.2 Z" fill="#4e2da6"/>
<path d="M1243.6 104.4 Q1241.4 108.5 1241.7 111.4 Q1245 111.2 1248.7 109.4" fill="none" stroke="#4e2da6" stroke-width="1.6"/>
<path d="M1239.7 110.3 Q1239.5 113.3 1242.4 113.7" fill="none" stroke="#4e2da6" stroke-width="1.2"/>


<rect x="1310.6" y="95.8" width="30" height="15.2" rx="2" fill="#fff" stroke="#a3a3a3" stroke-width="1.1"/>
<path d="M1314.4 95.8 Q1313.8 88 1320 87.4 Q1322.6 87.4 1325.6 89.6 Q1329.6 92.6 1332.6 91.2 Q1336.4 89 1336.6 84.6" fill="none" stroke="#a3a3a3" stroke-width="1.1"/>
<rect x="1313" y="98" width="1.4" height="1.5" fill="#a3a3a3"/><rect x="1318.6" y="98" width="1.4" height="1.5" fill="#a3a3a3"/><rect x="1321.6" y="98" width="1.4" height="1.5" fill="#a3a3a3"/><rect x="1324.6" y="98" width="1.4" height="1.5" fill="#a3a3a3"/><rect x="1327.6" y="98" width="1.4" height="1.5" fill="#a3a3a3"/><rect x="1337" y="98" width="1.4" height="1.5" fill="#a3a3a3"/><rect x="1313" y="101.3" width="1.4" height="1.5" fill="#a3a3a3"/><rect x="1316" y="101.3" width="1.4" height="1.5" fill="#a3a3a3"/><rect x="1319" y="101.3" width="1.4" height="1.5" fill="#a3a3a3"/><rect x="1322" y="101.3" width="1.4" height="1.5" fill="#a3a3a3"/><rect x="1325.6" y="101.3" width="4.8" height="1.5" fill="#a3a3a3"/><rect x="1337" y="101.3" width="1.4" height="1.5" fill="#a3a3a3"/><rect x="1313" y="104.1" width="4.6" height="1.5" fill="#a3a3a3"/><rect x="1319" y="104.1" width="1.4" height="1.5" fill="#a3a3a3"/><rect x="1322" y="104.1" width="1.4" height="1.5" fill="#a3a3a3"/><rect x="1328.8" y="102" width="1.6" height="1.5" fill="#a3a3a3"/><rect x="1337" y="104.1" width="1.4" height="1.5" fill="#a3a3a3"/><rect x="1313" y="107.2" width="1.4" height="1.5" fill="#a3a3a3"/><rect x="1316" y="107.2" width="1.4" height="1.5" fill="#a3a3a3"/><rect x="1319" y="107.2" width="11" height="1.5" fill="#a3a3a3"/><rect x="1334" y="107.2" width="1.4" height="1.5" fill="#a3a3a3"/><rect x="1337" y="107.2" width="1.4" height="1.5" fill="#a3a3a3"/>

<rect x="1395.1" y="82.8" width="24" height="27.2" rx="2.6" fill="none" stroke="#a3a3a3" stroke-width="1.5"/>
<rect x="1398" y="86.2" width="17.6" height="5.7" rx="0.8" fill="#a3a3a3"/>
<rect x="1398" y="95.1" width="3.8" height="3.6" fill="#a3a3a3"/><rect x="1405" y="95.1" width="3.8" height="3.6" fill="#a3a3a3"/><rect x="1411.8" y="95.1" width="3.8" height="3.6" fill="#a3a3a3"/>
<rect x="1398" y="101.4" width="3.8" height="3.6" fill="#a3a3a3"/><rect x="1405" y="101.4" width="3.8" height="3.6" fill="#a3a3a3"/>
<circle cx="1416.9" cy="107.2" r="7.6" fill="#fff"/>
<circle cx="1416.9" cy="107.2" r="6" fill="none" stroke="#a3a3a3" stroke-width="1.5"/>
<circle cx="1416.9" cy="107.4" r="3.3" fill="#a3a3a3"/>
<path d="M1419 103.6 L1422.4 103.2 L1421.6 106.4 Z" fill="#fff"/>

<rect x="1" y="226" width="30" height="30" rx="3" fill="#feeab3"/>
<g transform="translate(2 165) scale(0.815) translate(-376 -83)"><rect x="375.9" y="83" width="9.3" height="26.2" rx="2.2" fill="#4e2da6"/><rect x="377.5" y="86.4" width="6.1" height="11.6" fill="#fff"/><path d="M378.2 88.4 H383.09999999999997 M378.2 92 H383.09999999999997 M378.2 95.6 H383.09999999999997" stroke="#444" stroke-width="1.5" stroke-linecap="round"/><circle cx="380.54999999999995" cy="103.3" r="2.6" fill="#fff"/><rect x="387.3" y="83" width="9.3" height="26.2" rx="2.2" fill="#e9c12f"/><rect x="388.90000000000003" y="86.4" width="6.1" height="11.6" fill="#fff"/><path d="M389.6 88.4 H394.5 M389.6 92 H394.5 M389.6 95.6 H394.5" stroke="#444" stroke-width="1.5" stroke-linecap="round"/><circle cx="391.95" cy="103.3" r="2.6" fill="#fff"/><rect x="398.7" y="83" width="9.3" height="26.2" rx="2.2" fill="#4e2da6"/><rect x="400.3" y="86.4" width="6.1" height="11.6" fill="#fff"/><path d="M401.0 88.4 H405.9 M401.0 92 H405.9 M401.0 95.6 H405.9" stroke="#444" stroke-width="1.5" stroke-linecap="round"/><circle cx="403.34999999999997" cy="103.3" r="2.6" fill="#fff"/><rect x="376" y="110.2" width="32" height="3.7" rx="1" fill="#e6b062"/></g>
<g transform="translate(2 195.8) scale(0.81) translate(-446.8 -82.4)">
<path d="M456.4 85.8 V83.6 Q456.4 82.4 457.6 82.4 H468.4 Q469.6 82.4 469.6 83.6 V85.8" fill="none" stroke="#6e6e6e" stroke-width="1.2"/>
<rect x="446.8" y="87.2" width="32.2" height="25.6" rx="2.6" fill="#4e2da6"/>
<rect x="446.8" y="99" width="32.2" height="2.4" fill="#f4f0fb"/>
<rect x="459.2" y="95.4" width="7.6" height="9.8" rx="0.8" fill="#fff"/>
<rect x="460.8" y="96.6" width="4.4" height="7.4" fill="#e6b062"/>
</g>
<g transform="translate(2 229.9) scale(0.81) translate(-518.2 -84.2)">
<path d="M520 84.6 H548 Q549.4 84.6 549.4 86 V107.6 Q549.4 109 548 109 H544.3 V111.4 Q544.3 112.7 543 112.7 H520 Q518.6 112.7 518.6 111.3 V86 Q518.6 84.6 520 84.6 Z" fill="#fff" stroke="#555" stroke-width="1.2"/>
<path d="M518.2 88.6 V86 Q518.2 84.2 520 84.2 H548 Q549.8 84.2 549.8 86 V88.6 Z" fill="#4e2da6"/>
<path d="M521.6 91.2 H546.6" stroke="#666" stroke-width="1.6" stroke-linecap="round"/>
<path d="M521.6 95 H528.2 M530.8 95 H537.2 M521.6 98.8 H528.2 M530.8 98.8 H537.2 M521.6 102.5 H528.2 M530.8 102.5 H537.2" stroke="#b8b8b8" stroke-width="1.6" stroke-linecap="round"/>
<path d="M539.6 95 H546.6 M539.6 98.8 H546.6 M539.6 102.5 H546.6" stroke="#4e2da6" stroke-width="1.7" stroke-linecap="round"/>
<path d="M529.5 109 V112.7 M537 109 V112.7 M529.5 109 H544.3" stroke="#555" stroke-width="1"/>
</g>
<g transform="translate(43 447) scale(1.0)"><path d="M5.2 0 H6.8 Q7.4 0 7.8 0.6 L12 7.3 H0 L4.2 0.6 Q4.6 0 5.2 0 Z" fill="#e06a50"/><path d="M2.6 2.5 H9.4 M1.2 5 H10.8 M6 0.3 V2.5 M4.2 2.5 V5 M7.8 2.5 V5 M3 5 V7.2 M6 5 V7.2 M9 5 V7.2" stroke="#f9dccd" stroke-width="0.7"/><rect x="0.8" y="7.4" width="10.6" height="0.9" fill="#7c64c0"/></g>
<g transform="translate(43 510) scale(1.0)"><path d="M5.2 0 H6.8 Q7.4 0 7.8 0.6 L12 7.3 H0 L4.2 0.6 Q4.6 0 5.2 0 Z" fill="#e06a50"/><path d="M2.6 2.5 H9.4 M1.2 5 H10.8 M6 0.3 V2.5 M4.2 2.5 V5 M7.8 2.5 V5 M3 5 V7.2 M6 5 V7.2 M9 5 V7.2" stroke="#f9dccd" stroke-width="0.7"/><rect x="0.8" y="7.4" width="10.6" height="0.9" fill="#7c64c0"/></g>
<g transform="translate(43 586) scale(1.0)"><path d="M5.2 0 H6.8 Q7.4 0 7.8 0.6 L12 7.3 H0 L4.2 0.6 Q4.6 0 5.2 0 Z" fill="#e06a50"/><path d="M2.6 2.5 H9.4 M1.2 5 H10.8 M6 0.3 V2.5 M4.2 2.5 V5 M7.8 2.5 V5 M3 5 V7.2 M6 5 V7.2 M9 5 V7.2" stroke="#f9dccd" stroke-width="0.7"/><rect x="0.8" y="7.4" width="10.6" height="0.9" fill="#7c64c0"/></g>
<path d="M751.2 583.6 H753.6 V590.2 H751.2 Z M755 581 H757.6 V590.2 H755 Z M759 578.2 H761.4 V586 H759 Z" fill="#4e2da6"/><circle cx="760.2" cy="587" r="3.6" fill="#e6b062"/><path d="M759.4 589.4 V584.8 H760.8 Q762 584.8 762 586 Q762 587.2 760.8 587.2 H758.8 M758.8 588.3 H761" fill="none" stroke="#4e2da6" stroke-width="0.9"/>
<path d="M751.2 603.2 H761.6 Q762.6 603.2 762.4 604.2 L761.6 609.6 H751.2 Z" fill="#4e2da6"/><path d="M754.4 605.2 H757 L755.4 608.4" fill="none" stroke="#fff" stroke-width="1"/><circle cx="760.9" cy="610.4" r="3.4" fill="#e05038" stroke="#fff" stroke-width="0.8"/><circle cx="760.9" cy="610.4" r="1.4" fill="none" stroke="#f8c8b8" stroke-width="0.8"/>
<g transform="translate(751.2 636) scale(1.03)"><path d="M5.2 0 H6.8 Q7.4 0 7.8 0.6 L12 7.3 H0 L4.2 0.6 Q4.6 0 5.2 0 Z" fill="#e06a50"/><path d="M2.6 2.5 H9.4 M1.2 5 H10.8 M6 0.3 V2.5 M4.2 2.5 V5 M7.8 2.5 V5 M3 5 V7.2 M6 5 V7.2 M9 5 V7.2" stroke="#f9dccd" stroke-width="0.7"/><rect x="0.8" y="7.4" width="10.6" height="0.9" fill="#7c64c0"/></g>
<rect x="751" y="657.6" width="12.6" height="11.2" rx="1" fill="#e6b062"/><rect x="756" y="657.6" width="2.6" height="2" fill="#8a8a8a"/><path d="M753 663.6 H756 M754.5 663.6 V667.6 M757.4 663 H760 M758.6 663 V667.6" stroke="#8a6a4a" stroke-width="0.9"/><rect x="760" y="659.4" width="2.6" height="3.6" fill="#4e2da6"/>
<rect x="751.4" y="681.4" width="12" height="12.2" rx="1.2" fill="#fff" stroke="#555" stroke-width="0.9"/><path d="M753.2 683.6 H759 M753.2 688.5 H759" stroke="#4e2da6" stroke-width="1"/><path d="M754 685.2 H759 M754 686.8 H759 M754 690.2 H759 M754 691.8 H759" stroke="#777" stroke-width="0.8"/><path d="M761 683 V691" stroke="#e6b062" stroke-width="1.5"/><path d="M759.8 690.4 L761 692.4 L762.2 690.4 Z" fill="#e6b062"/>
<g transform="translate(751 712) scale(0.44) translate(-25.6 -82.6)">
<path d="M27 82.6 H38.3 L42.4 86.7 V103.2 Q42.4 104.6 41 104.6 H27 Q25.6 104.6 25.6 103.2 V84 Q25.6 82.6 27 82.6 Z" fill="#fff" stroke="#6e6e6e" stroke-width="1.2"/>
<path d="M38.3 82.6 V85.6 Q38.3 86.7 39.4 86.7 H42.4" fill="none" stroke="#6e6e6e" stroke-width="1.1"/>
<path d="M28.6 91.2 H35.5 M28.6 95.2 H35.5 M28.6 99.2 H35.5" stroke="#4e2da6" stroke-width="2.1" stroke-linecap="round"/>
<path d="M38 89.6 H49.6 L54.5 94.5 V112 Q54.5 113.4 53.1 113.4 H38 Q36.6 113.4 36.6 112 V91 Q36.6 89.6 38 89.6 Z" fill="#fff" stroke="#6e6e6e" stroke-width="1.2"/>
<path d="M49.6 89.6 V93.3 Q49.6 94.5 50.8 94.5 H54.5" fill="none" stroke="#6e6e6e" stroke-width="1.1"/>
<path d="M40.3 99.3 H51.6 M40.3 103.6 H51.6 M40.3 108 H51.6" stroke="#4e2da6" stroke-width="2.4" stroke-linecap="round"/>
</g>
<g transform="translate(751.4 735.8) scale(0.45) translate(-169.8 -81.8)">
<path d="M170.2 81.8 Q171.6 81.9 172.6 83 L184.7 97.3 L182.7 100.3 L179.7 97.9 L169.7 84.2 Q169.1 82.3 170.2 81.8 Z" fill="#4e2da6"/>
<path d="M182 98.6 L186.2 104.4" stroke="#4e2da6" stroke-width="2"/>
<ellipse cx="188.2" cy="108.5" rx="3.7" ry="4.8" transform="rotate(-30 188.2 108.5)" fill="none" stroke="#4e2da6" stroke-width="2"/>
<path d="M192.9 82 Q192.7 86 190.4 89.7 L185.3 96.9 L182.6 94.7 L187.6 87.4 Q190 84 192.9 82 Z" fill="#6e6e6e"/>
<path d="M181 101.8 L177.6 104.6" stroke="#6e6e6e" stroke-width="1.8"/>
<ellipse cx="174.5" cy="108.5" rx="3.6" ry="4.8" transform="rotate(32 174.5 108.5)" fill="none" stroke="#6e6e6e" stroke-width="1.8"/>
</g>
<g transform="translate(751 760) scale(0.42) translate(-95 -81.6)">
<rect x="95" y="86" width="26.2" height="27" rx="2.2" fill="#e6b062"/>
<path d="M99.4 85.6 Q101.4 89.5 104.2 89.5 H111.8 Q114.6 89.5 116.4 85.6 Z" fill="#fff"/>
<rect x="102" y="84.8" width="11.8" height="3.1" rx="1.5" fill="#6e6e6e"/>
<path d="M105.3 85.2 L106.1 82.6 Q106.3 81.9 107 81.9 H108.8 Q109.5 81.9 109.7 82.6 L110.4 85.2 Z" fill="#6e6e6e"/>
<rect x="107" y="83" width="1.8" height="1" fill="#fff"/>
<path d="M112.6 93.6 H122.2 L126.6 98 V112.2 Q126.6 113.6 125.2 113.6 H112.6 Q111.2 113.6 111.2 112.2 V95 Q111.2 93.6 112.6 93.6 Z" fill="#fff" stroke="#fff" stroke-width="3"/>
<path d="M112.6 93.6 H122.2 L126.6 98 V112.2 Q126.6 113.6 125.2 113.6 H112.6 Q111.2 113.6 111.2 112.2 V95 Q111.2 93.6 112.6 93.6 Z" fill="#fff" stroke="#6e6e6e" stroke-width="1.2"/>
<path d="M122.2 93.6 V96.8 Q122.2 98 123.4 98 H126.6" fill="none" stroke="#6e6e6e" stroke-width="1.1"/>
<path d="M114.6 101.8 H123.6 M114.6 105.2 H123.6 M114.6 108.8 H123.6" stroke="#4e2da6" stroke-width="2" stroke-linecap="round"/>
</g>
<g transform="translate(751.6 790.8) scale(0.86) translate(-239.6 -118)">
<path d="M239.6 121.2 V119.6 Q239.6 118.8 240.4 118.8 H244 V118 H248 V118.8 H251.6 Q252.4 118.8 252.4 119.6 V121.2 Z" fill="#d9503a"/>
<path d="M241 122.2 H251 V131.4 Q251 133 249.4 133 H242.6 Q241 133 241 131.4 Z" fill="#d9503a"/>
</g>
<path d="M55.8 1024.6 L59.2 1021.2 L62.6 1024.6 L59.2 1028 Z" fill="#e6b062"/>
<circle cx="64.4" cy="1019.6" r="5.3" fill="#fdeab2" stroke="#4e2da6" stroke-width="1.8"/><rect x="62" y="1017.4" width="4.6" height="4.6" rx="1.2" fill="#e6b062"/><circle cx="64.4" cy="1019.4" r="0.6" fill="#fff"/>
<path d="M68.2 1023.6 L72.8 1028.4" stroke="#4e2da6" stroke-width="2" stroke-linecap="round"/>
<path d="M215.4 1017.2 L224.8 1026.4 M224.8 1017.2 L215.4 1026.4" stroke="#222" stroke-width="1.5"/>
</svg>
</body></html>
